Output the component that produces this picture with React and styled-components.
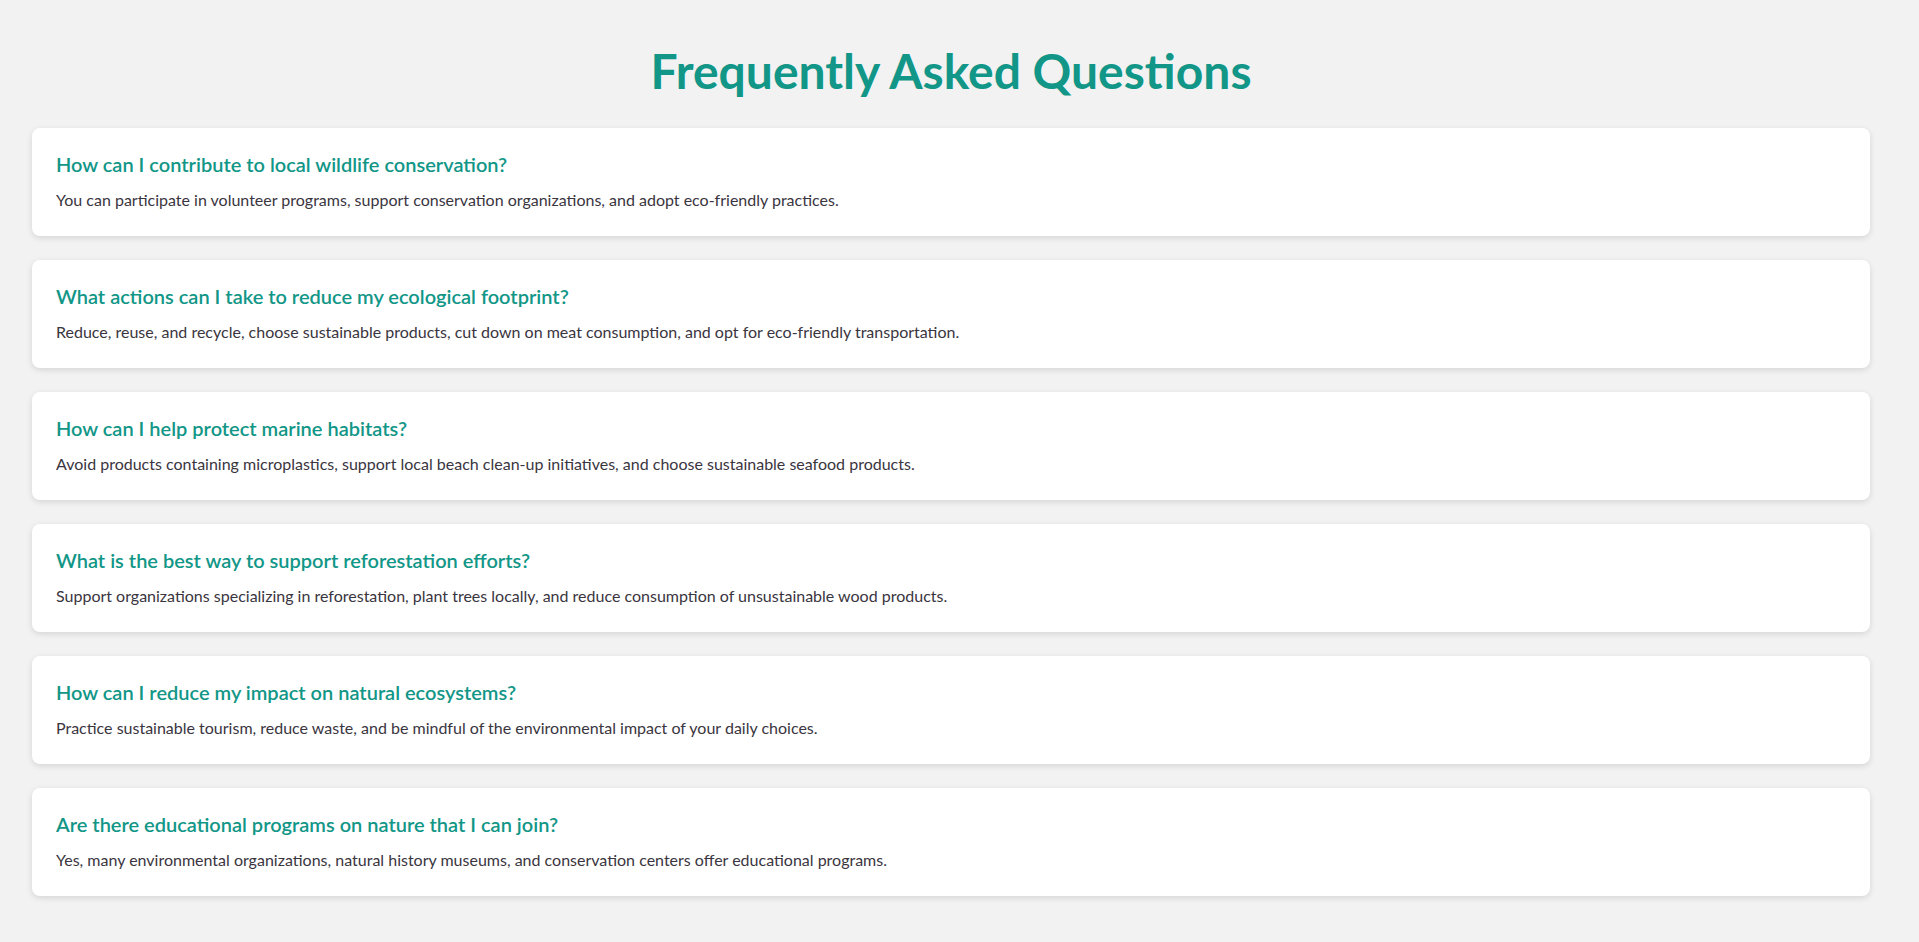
import React from 'react';
import styled, { createGlobalStyle } from 'styled-components';

const GlobalStyle = createGlobalStyle`
  html, body {
    margin: 0;
    padding: 0;
    background-color: #f2f2f2;
  }

  body {
    font-family: Lato, "Open Sans", sans-serif;
    color: #333;
  }
`;

// the reference was taken with a 17px scrollbar taking room on the right
const FaqContainer = styled.section`
  width: calc(100% - 17px);
  box-sizing: border-box;
  padding: 42px 32px 170px;
`;

const FaqHeading = styled.h1`
  font-size: 48px;
  font-weight: 700;
  line-height: 58px;
  margin: 0 0 28px;
  text-align: center;
  color: #119687;
`;

const FaqList = styled.div`
  display: flex;
  flex-direction: column;
  gap: 24px;
`;

const FaqCard = styled.div`
  background-color: #fff;
  border-radius: 8px;
  padding: 24px;
  box-shadow: 0 2px 6px rgba(0, 0, 0, 0.12);
`;

const Question = styled.h3`
  font-size: 20px;
  font-weight: 600;
  line-height: 24px;
  margin: 0 0 12px;
  color: #119687;
`;

const Answer = styled.p`
  font-size: 16px;
  font-weight: 400;
  line-height: 24px;
  margin: 0;
  color: #3a3540;
`;

const faqs = [
  {
    q: 'How can I contribute to local wildlife conservation?',
    a: 'You can participate in volunteer programs, support conservation organizations, and adopt eco-friendly practices.',
  },
  {
    q: 'What actions can I take to reduce my ecological footprint?',
    a: 'Reduce, reuse, and recycle, choose sustainable products, cut down on meat consumption, and opt for eco-friendly transportation.',
  },
  {
    q: 'How can I help protect marine habitats?',
    a: 'Avoid products containing microplastics, support local beach clean-up initiatives, and choose sustainable seafood products.',
  },
  {
    q: 'What is the best way to support reforestation efforts?',
    a: 'Support organizations specializing in reforestation, plant trees locally, and reduce consumption of unsustainable wood products.',
  },
  {
    q: 'How can I reduce my impact on natural ecosystems?',
    a: 'Practice sustainable tourism, reduce waste, and be mindful of the environmental impact of your daily choices.',
  },
  {
    q: 'Are there educational programs on nature that I can join?',
    a: 'Yes, many environmental organizations, natural history museums, and conservation centers offer educational programs.',
  },
];

const App = () => {
  return (
    <>
      <GlobalStyle />
      <FaqContainer>
        <FaqHeading>Frequently Asked Questions</FaqHeading>
        <FaqList>
          {faqs.map((item) => (
            <FaqCard key={item.q}>
              <Question>{item.q}</Question>
              <Answer>{item.a}</Answer>
            </FaqCard>
          ))}
        </FaqList>
      </FaqContainer>
    </>
  );
};

export default App;
